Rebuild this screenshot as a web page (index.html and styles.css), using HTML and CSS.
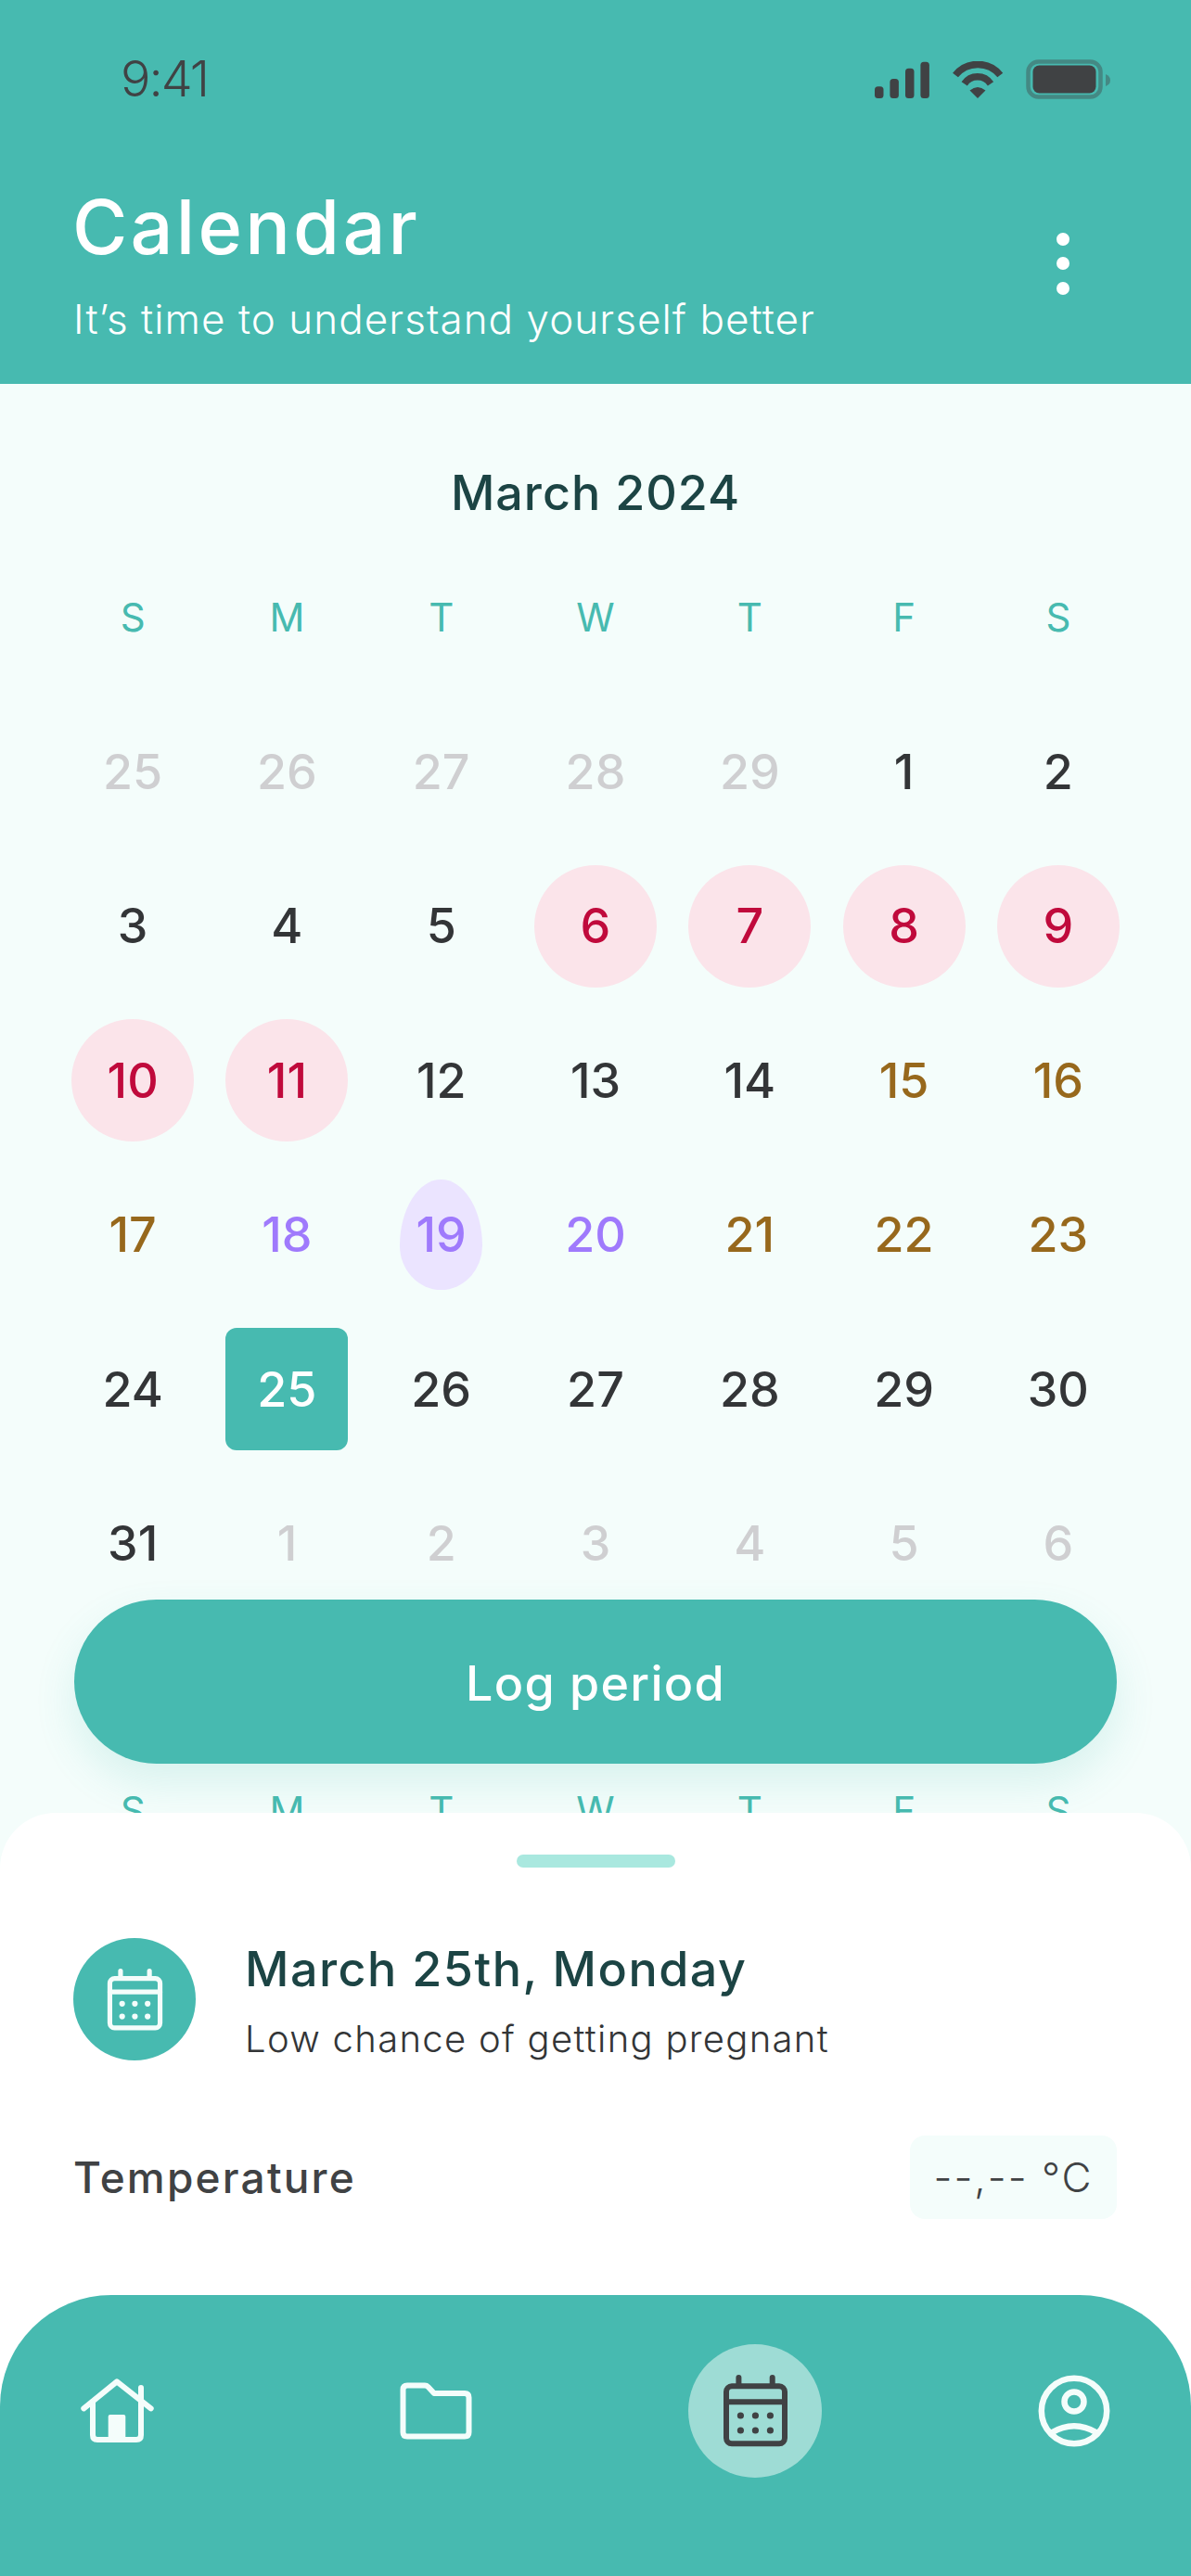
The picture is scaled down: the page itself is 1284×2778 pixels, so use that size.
FILE: index.html
```html
<!DOCTYPE html>
<html lang="en">
<head>
  <meta charset="UTF-8" />
  <title>Calendar</title>
  <link rel="stylesheet" href="styles.css">
</head>
<body>
  <svg class="defs" width="0" height="0">
    <symbol id="cal" viewBox="0 0 73 78">
      <g fill="none" stroke="currentColor" stroke-width="6" stroke-linecap="round">
        <rect x="5" y="12.3" width="63" height="62" rx="6" />
        <path d="M5 29.3H68M18.4 3V10M54.7 3V10" />
      </g>
      <g fill="currentColor">
        <circle cx="20.4" cy="44" r="3.6" /><circle cx="36.4" cy="44" r="3.6" /><circle cx="52.4" cy="44" r="3.6" />
        <circle cx="20.4" cy="60" r="3.6" /><circle cx="36.4" cy="60" r="3.6" /><circle cx="52.4" cy="60" r="3.6" />
      </g>
    </symbol>
  </svg>

  <header class="top">
    <div class="status">
      <span class="time">9:41</span>
      <div class="status-icons">
        <svg width="59" height="40" viewBox="0 0 59 40" fill="#404244">
          <rect x="0" y="27.3" width="9.5" height="12.7" rx="3.5" />
          <rect x="16.4" y="19" width="9.5" height="21" rx="3.5" />
          <rect x="33" y="7.7" width="9.5" height="32.3" rx="3.5" />
          <rect x="49.4" y="0.7" width="9.5" height="39.3" rx="3.5" />
        </svg>
        <svg width="56" height="40" viewBox="0 0 56 40">
          <path d="M4 15A31 31 0 0 1 52.3 15M13.7 24.3A17 17 0 0 1 42 24.3" fill="none" stroke="#404244" stroke-width="7.5" />
          <path d="M19.5 31.5Q28 24.5 36.5 31.5L28 40Z" fill="#404244" />
        </svg>
        <svg width="92" height="43" viewBox="0 0 92 43">
          <rect x="2.5" y="2.5" width="78" height="38" rx="11" fill="none" stroke="#404244" stroke-opacity=".4" stroke-width="4.5" />
          <rect x="7.5" y="6.5" width="68" height="30" rx="7" fill="#404244" />
          <path d="M86 16Q91 18 91 22.5T86 29Z" fill="#404244" fill-opacity=".4" />
        </svg>
      </div>
    </div>
    <div class="top-row">
      <div>
        <h1>Calendar</h1>
        <p class="tagline">It’s time to understand yourself better</p>
      </div>
      <div class="more"><i></i><i></i><i></i></div>
    </div>
  </header>

  <main class="cal-area">
    <h2 class="month">March 2024</h2>
    <div class="grid">
      <div class="wd">S</div><div class="wd">M</div><div class="wd">T</div><div class="wd">W</div><div class="wd">T</div><div class="wd">F</div><div class="wd">S</div>

      <div class="day muted">25</div><div class="day muted">26</div><div class="day muted">27</div><div class="day muted">28</div><div class="day muted">29</div><div class="day">1</div><div class="day">2</div>

      <div class="day">3</div><div class="day">4</div><div class="day">5</div>
      <div class="day"><span class="period">6</span></div><div class="day"><span class="period">7</span></div><div class="day"><span class="period">8</span></div><div class="day"><span class="period">9</span></div>

      <div class="day"><span class="period">10</span></div><div class="day"><span class="period">11</span></div>
      <div class="day">12</div><div class="day">13</div><div class="day">14</div><div class="day brown">15</div><div class="day brown">16</div>

      <div class="day brown">17</div><div class="day purple">18</div>
      <div class="day purple"><span class="egg">19</span></div>
      <div class="day purple">20</div><div class="day brown">21</div><div class="day brown">22</div><div class="day brown">23</div>

      <div class="day">24</div><div class="day"><span class="today">25</span></div><div class="day">26</div><div class="day">27</div><div class="day">28</div><div class="day">29</div><div class="day">30</div>

      <div class="day">31</div><div class="day muted">1</div><div class="day muted">2</div><div class="day muted">3</div><div class="day muted">4</div><div class="day muted">5</div><div class="day muted">6</div>
    </div>
    <div class="grid next">
      <div class="wd">S</div><div class="wd">M</div><div class="wd">T</div><div class="wd">W</div><div class="wd">T</div><div class="wd">F</div><div class="wd">S</div>
    </div>
    <button class="log-btn">Log period</button>
  </main>

  <section class="sheet">
    <div class="handle"></div>
    <div class="info">
      <div class="info-icon"><svg width="63" height="67"><use href="#cal" /></svg></div>
      <div class="info-text">
        <h3>March 25th, Monday</h3>
        <p>Low chance of getting pregnant</p>
      </div>
    </div>
    <div class="temp">
      <span class="temp-label">Temperature</span>
      <span class="temp-box">--,-- °C</span>
    </div>

    <nav class="nav">
      <a class="nav-item">
        <svg width="80" height="72" viewBox="0 0 80 72" fill="none" stroke="#f4fdfb" stroke-width="6" stroke-linecap="round" stroke-linejoin="round">
          <path d="M4.3 33.3L40 4.3L76.7 33.3" />
          <path d="M14 26V62Q14 67 19 67H61Q66 67 66 62V11" />
          <rect x="30.7" y="40" width="18.6" height="27" rx="2" fill="#f4fdfb" stroke="none" />
        </svg>
      </a>
      <a class="nav-item">
        <svg width="90" height="70" viewBox="0 0 90 70" fill="none" stroke="#f4fdfb" stroke-width="6" stroke-linejoin="round">
          <path d="M14 7.5H33Q35 7.5 36.5 9L43 16H76Q80.5 16 80.5 20.5V58Q80.5 62.5 76 62.5H14Q9.5 62.5 9.5 58V12Q9.5 7.5 14 7.5Z" />
        </svg>
      </a>
      <a class="nav-item active"><svg width="73" height="78"><use href="#cal" /></svg></a>
      <a class="nav-item">
        <svg width="78" height="78" viewBox="0 0 78 78" fill="none" stroke="#f4fdfb" stroke-width="6.5">
          <circle cx="39" cy="39" r="35.2" />
          <circle cx="39" cy="29" r="10.5" />
          <path d="M14.5 62.5Q39 48 63.5 62.5" />
        </svg>
      </a>
    </nav>
  </section>
</body>
</html>
```

FILE: styles.css
```css
* { box-sizing: border-box; }
html, body { margin: 0; padding: 0; }
body { width: 1284px; height: 2778px; overflow: hidden; background-color: #f4fdfb; color: #333537; font-family: Inter, "Liberation Sans", sans-serif; }
h1, h2, h3, p { margin: 0; }
.defs { position: absolute; }

/* header */
.top { height: 414px; background-color: #47bab0; color: #fff; padding: 50px 80px 0; }
.status { display: flex; justify-content: space-between; align-items: center; height: 68px; margin-right: 6px; padding-left: 50px; }
.time { font-size: 54px; font-weight: 300; color: #404244; letter-spacing: -2px; }
.status-icons { display: flex; align-items: center; gap: 24px; padding-top: 3px; }
.top-row { display: flex; justify-content: space-between; align-items: center; margin-top: 79px; }
h1 { font-size: 81px; font-weight: 500; line-height: 96px; letter-spacing: 3.2px; margin-left: -2px; }
.tagline { font-size: 44px; font-weight: 300; line-height: 80px; margin-top: 11px; letter-spacing: 1.05px; margin-left: -1px; }
.more { display: flex; flex-direction: column; gap: 12.5px; margin-right: 51px; margin-bottom: 13px; }
.more i { display: block; width: 14px; height: 14px; border-radius: 50%; background-color: #fff; }

/* calendar */
.cal-area { position: relative; height: 1541px; overflow: hidden; padding: 66px 60px 0; }
.month { font-size: 52px; font-weight: 500; line-height: 103px; text-align: center; color: #1c4444; letter-spacing: 1px; }
.grid { display: grid; grid-template-columns: repeat(7, 1fr); grid-auto-rows: 166.4px; }
.grid.next { margin-top: 123px; }
.wd, .day { display: flex; align-items: center; justify-content: center; }
.wd { font-size: 42px; color: #47bab0; padding-bottom: 2px; }
.day { font-size: 52px; font-weight: 500; }
.muted { color: #cfcfd1; }
.brown { color: #97681c; }
.purple { color: #9f7afc; }
.period, .today, .egg { display: flex; align-items: center; justify-content: center; }
.period { width: 132px; height: 132px; border-radius: 50%; background-color: #fbe4ea; color: #c00a3c; }
.egg { width: 89px; height: 119px; border-radius: 50% 50% 50% 50% / 60% 60% 40% 40%; background-color: #ebe4ff; }
.today { width: 132px; height: 132px; border-radius: 12px; background-color: #47bab0; color: #fff; }
.log-btn { position: absolute; left: 80px; right: 80px; top: 1311px; height: 177px; padding-top: 4px; border: none; border-radius: 89px; background-color: #47bab0; color: #fff; font-family: inherit; font-size: 52px; font-weight: 500; letter-spacing: 1.3px; box-shadow: 0 20px 44px rgba(71, 186, 176, 0.16); }

/* bottom sheet */
.sheet { position: relative; display: flex; flex-direction: column; height: 823px; border-radius: 60px 60px 0 0; background-color: #fff; padding-top: 45px; }
.handle { width: 171px; height: 14px; margin: 0 auto; border-radius: 7px; background-color: #a9e8df; }
.info { display: flex; align-items: flex-start; gap: 53px; margin: 76px 80px 0 79px; }
.info-icon { display: flex; align-items: center; justify-content: center; flex: none; width: 132px; height: 132px; border-radius: 50%; background-color: #47bab0; color: #f4fdfb; }
.info-text { padding-top: 3px; }
.info-text h3 { font-size: 52px; font-weight: 500; line-height: 62px; color: #1c4444; letter-spacing: 1.5px; }
.info-text p { font-size: 40px; font-weight: 300; line-height: 60px; margin-top: 14px; letter-spacing: 1.3px; }
.temp { display: flex; justify-content: space-between; align-items: center; margin: 74px 80px 0; }
.temp-label { font-size: 46px; font-weight: 500; color: #404244; letter-spacing: 2.2px; margin-left: -1px; }
.temp-box { display: flex; align-items: center; justify-content: center; width: 223px; height: 90px; border-radius: 16px; background-color: #f4fdfb; font-size: 44px; font-weight: 300; color: #404244; letter-spacing: 2px; }

/* nav */
.nav { display: flex; justify-content: space-between; height: 303px; margin-top: auto; padding: 53px 54px 0; border-radius: 120px 120px 0 0; background-color: #47bab0; }
.nav-item { display: flex; align-items: center; justify-content: center; width: 144px; height: 144px; border-radius: 50%; }
.nav-item.active { background-color: #9edcd5; color: #404244; }
```
